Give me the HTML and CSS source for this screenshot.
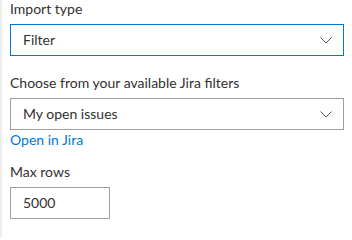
FILE: index.html
```html
<!DOCTYPE html>
<html>
<head>
<meta charset="utf-8">
<link rel="stylesheet" href="styles.css">
</head>
<body>
<div class="panel">
  <div class="field first">
    <div class="label">Import type</div>
    <div class="select focused">
      <span class="value">Filter</span>
      <svg class="chev" width="12" height="7" viewBox="0 0 12 7"><polyline points="0.5,0.5 6,6 11.5,0.5" fill="none" stroke="#605e5c" stroke-width="1"/></svg>
    </div>
  </div>
  <div class="field">
    <div class="label">Choose from your available Jira filters</div>
    <div class="select">
      <span class="value">My open issues</span>
      <svg class="chev" width="12" height="7" viewBox="0 0 12 7"><polyline points="0.5,0.5 6,6 11.5,0.5" fill="none" stroke="#605e5c" stroke-width="1"/></svg>
    </div>
    <a class="link" href="#">Open in Jira</a>
  </div>
  <div class="field last">
    <div class="label">Max rows</div>
    <div class="input"><span class="value">5000</span></div>
  </div>
</div>
</body>
</html>
```
FILE: styles.css
```css
html, body {
  margin: 0;
  padding: 0;
  background: #ffffff;
}
body {
  font-family: Lato, "Noto Sans", sans-serif;
  font-size: 14px;
  color: #323130;
}
.panel {
  border-left: 2px solid #ececec;
  height: 237px;
  box-sizing: border-box;
  padding: 0 8px 0 8px;
  display: flex;
  flex-direction: column;
}
.field {
  display: flex;
  flex-direction: column;
  align-items: flex-start;
  margin-top: 12px;
}
.field.first {
  margin-top: -6px;
}
.field.last {
  margin-top: 7px;
}
.label {
  line-height: 20px;
  padding: 5px 0;
}
.select {
  align-self: stretch;
  height: 32px;
  box-sizing: border-box;
  border: 1px solid #a19f9d;
  display: flex;
  align-items: center;
  justify-content: space-between;
  padding: 0 11px 0 12px;
}
.select.focused {
  border-color: #0078d4;
}
.input {
  width: 100px;
  height: 32px;
  box-sizing: border-box;
  border: 1px solid #a19f9d;
  display: flex;
  align-items: center;
  padding: 0 12px;
}
.value {
  line-height: 20px;
}
.chev {
  display: block;
}
.link {
  color: #0078d4;
  text-decoration: none;
  line-height: 20px;
}
```
